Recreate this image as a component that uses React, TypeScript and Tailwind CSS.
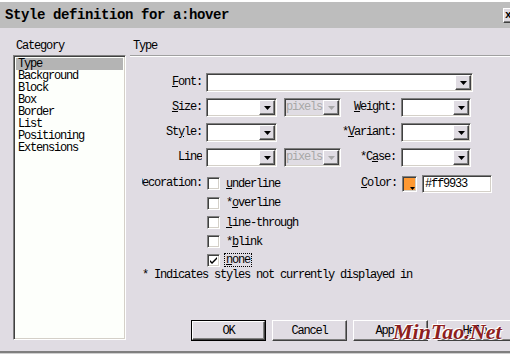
import React from "react";

const sunken =
  "border border-t-[#808080] border-l-[#808080] border-b-white border-r-white shadow-[inset_1px_1px_0_#404040,inset_-1px_-1px_0_#d4d0c8]";
const raised =
  "border border-t-white border-l-white border-b-[#404040] border-r-[#404040] shadow-[inset_-1px_-1px_0_#808080]";

function Arrow({ color = "#000" }: { color?: string }) {
  return (
    <svg width="7" height="4" viewBox="0 0 7 4">
      <path d="M0 0h7L3.5 4z" fill={color} />
    </svg>
  );
}

function Select({ w, disabled, text }: { w: string; disabled?: boolean; text?: string }) {
  return (
    <div className={`flex h-[19px] ${w} ${sunken} ${disabled ? "bg-[#e0dce3]" : "bg-white"}`}>
      <div className="flex-1 whitespace-nowrap pl-[1px] leading-[17px] text-[#a8a8a8]">{text}</div>
      <div className={`m-[1px] flex w-[16px] shrink-0 items-center justify-center bg-[#e0dce3] ${raised}`}>
        <Arrow color={disabled ? "#a8a8a8" : "#000"} />
      </div>
    </div>
  );
}

function Label({ children, w = "w-[60px]" }: { children: React.ReactNode; w?: string }) {
  return (
    <div className={`${w} shrink-0 overflow-hidden whitespace-nowrap text-right leading-[19px]`}>
      <span className="inline-block">{children}</span>
    </div>
  );
}

function Check({ checked, children, focus }: { checked?: boolean; children: React.ReactNode; focus?: boolean }) {
  return (
    <div className="flex items-center">
      <div className={`ml-[1px] flex h-[13px] w-[13px] items-center justify-center bg-white ${sunken}`}>
        {checked && (
          <svg width="7" height="7" viewBox="0 0 7 7">
            <path d="M0 3l2 2 5-5v2L2 7 0 5z" fill="#000" />
          </svg>
        )}
      </div>
      <span className={`ml-[4px] px-[1px] leading-[12px] ${focus ? "border border-dotted border-black" : "border border-transparent"}`}>
        {children}
      </span>
    </div>
  );
}

function Button({ children, def }: { children: React.ReactNode; def?: boolean }) {
  return (
    <div className={`h-[21px] w-[75px] ${def ? "border border-black" : ""}`}>
      <div className={`flex h-full items-center justify-center bg-[#e0dce3] ${raised}`}>{children}</div>
    </div>
  );
}

const categories = ["Type", "Background", "Block", "Box", "Border", "List", "Positioning", "Extensions"];

export default function App() {
  return (
    <div className="relative h-[354px] w-[510px] overflow-hidden bg-[#e0dce3] font-['Liberation_Mono',monospace] text-[12px] tracking-[-1.2px] text-black">
      {/* Title bar */}
      <div className="flex h-[28px] items-center border-t-2 border-white bg-[#bdbdbd] pl-[5px]">
        <span className="flex-1 text-[14px] font-bold tracking-[-0.4px]">Style definition for a:hover</span>
        <div className={`flex h-[15px] w-[16px] shrink-0 translate-x-[9px] items-center justify-start bg-[#e0dce3] pl-[1px] text-[11px] font-bold ${raised}`}>
          x
        </div>
      </div>

      <div className="flex h-[323px]">
        {/* Category */}
        <div className="w-[130px] shrink-0 pl-[13px] pt-[12px]">
          <div className="h-[12px] pl-[3px] leading-[12px]">Category</div>
          <div className={`mt-[3px] h-[285px] w-[113px] bg-[#fdfffb] p-[2px] ${sunken}`}>
            {categories.map((c, i) => (
              <div key={c} className={`h-[12px] pl-[2px] leading-[12px] ${i === 0 ? "bg-[#b4b4b4]" : ""}`}>
                {c}
              </div>
            ))}
          </div>
        </div>

        {/* Type panel */}
        <div className="flex flex-1 flex-col pt-[12px]">
          <div className="h-[12px] pl-[3px] leading-[12px]">Type</div>
          <div className="mt-[3px] h-[2px] border-t border-[#a0a0a0] border-b border-b-white" />

          <div className="mt-[16px] flex flex-col gap-[6px] pl-[12px]">
            <div className="flex gap-[4px]">
              <Label><u>F</u>ont:</Label>
              <Select w="w-[267px]" />
            </div>
            <div className="flex">
              <Label><u>S</u>ize:</Label>
              <div className="ml-[4px]"><Select w="w-[71px]" /></div>
              <div className="ml-[7px]"><Select w="w-[57px]" disabled text="pixels" /></div>
              <Label w="w-[55px]"><u>W</u>eight:</Label>
              <div className="ml-[5px]"><Select w="w-[70px]" /></div>
            </div>
            <div className="flex">
              <Label>St<u>y</u>le:</Label>
              <div className="ml-[4px]"><Select w="w-[71px]" /></div>
              <div className="w-[64px]" />
              <Label w="w-[55px]">*<u>V</u>ariant:</Label>
              <div className="ml-[5px]"><Select w="w-[70px]" /></div>
            </div>
            <div className="flex">
              <Label>Line</Label>
              <div className="ml-[4px]"><Select w="w-[71px]" /></div>
              <div className="ml-[7px]"><Select w="w-[57px]" disabled text="pixels" /></div>
              <Label w="w-[55px]">*C<u>a</u>se:</Label>
              <div className="ml-[5px]"><Select w="w-[70px]" /></div>
            </div>
          </div>

          {/* Decoration + Color */}
          <div className="mt-[7px] flex pl-[12px]">
            <div className="flex w-[60px] shrink-0 justify-end overflow-hidden whitespace-nowrap leading-[19px]">
              Decoration:
            </div>
            <div className="ml-[4px] flex w-[135px] flex-col">
              <div className="flex h-[19px] items-center"><Check><u>u</u>nderline</Check></div>
              <div className="flex h-[20px] items-center"><Check>*<u>o</u>verline</Check></div>
              <div className="flex h-[19px] items-center"><Check><u>l</u>ine-through</Check></div>
              <div className="flex h-[19px] items-center"><Check>*<u>b</u>link</Check></div>
              <div className="flex h-[18px] items-center"><Check checked focus><u>n</u>one</Check></div>
            </div>
            <Label w="w-[56px]"><u>C</u>olor:</Label>
            <div className="ml-[5px] flex h-[19px] items-center gap-[5px]">
              <div className={`relative h-[16px] w-[15px] bg-[#ff9933] ${sunken}`}>
                <div className="absolute bottom-[1px] right-[1px] flex h-[5px] w-[6px] items-end justify-center bg-[#ff9933]">
                  <svg width="5" height="3" viewBox="0 0 5 3"><path d="M0 0h5L2.5 3z" fill="#000" /></svg>
                </div>
              </div>
              <div className={`h-[18px] w-[70px] bg-white pl-[2px] leading-[16px] ${sunken}`}>#ff9933</div>
            </div>
          </div>

          <div className="h-[12px] pl-[12px] leading-[12px]">* Indicates styles not currently displayed in</div>

          <div className="mt-auto flex pb-[10px] pl-[61px]">
            <Button def>OK</Button>
            <div className="ml-[6px]"><Button>Cancel</Button></div>
            <div className="ml-[6px]"><Button>Apply</Button></div>
            <div className="ml-[9px]"><Button><u>H</u>elp</Button></div>
          </div>
        </div>
      </div>

      <div className="h-[3px] border-t-2 border-[#7f7f7f] bg-[#cfcfcf]" />

      {/* watermark */}
      <div className="absolute bottom-[6px] left-[393px] font-['Liberation_Serif',serif] text-[22px] font-bold italic tracking-[0px] text-[#8e1f1f] [text-shadow:1px_1px_0_#fff,-1px_-1px_0_#fff]">
        MinTao.Net
      </div>
    </div>
  );
}
